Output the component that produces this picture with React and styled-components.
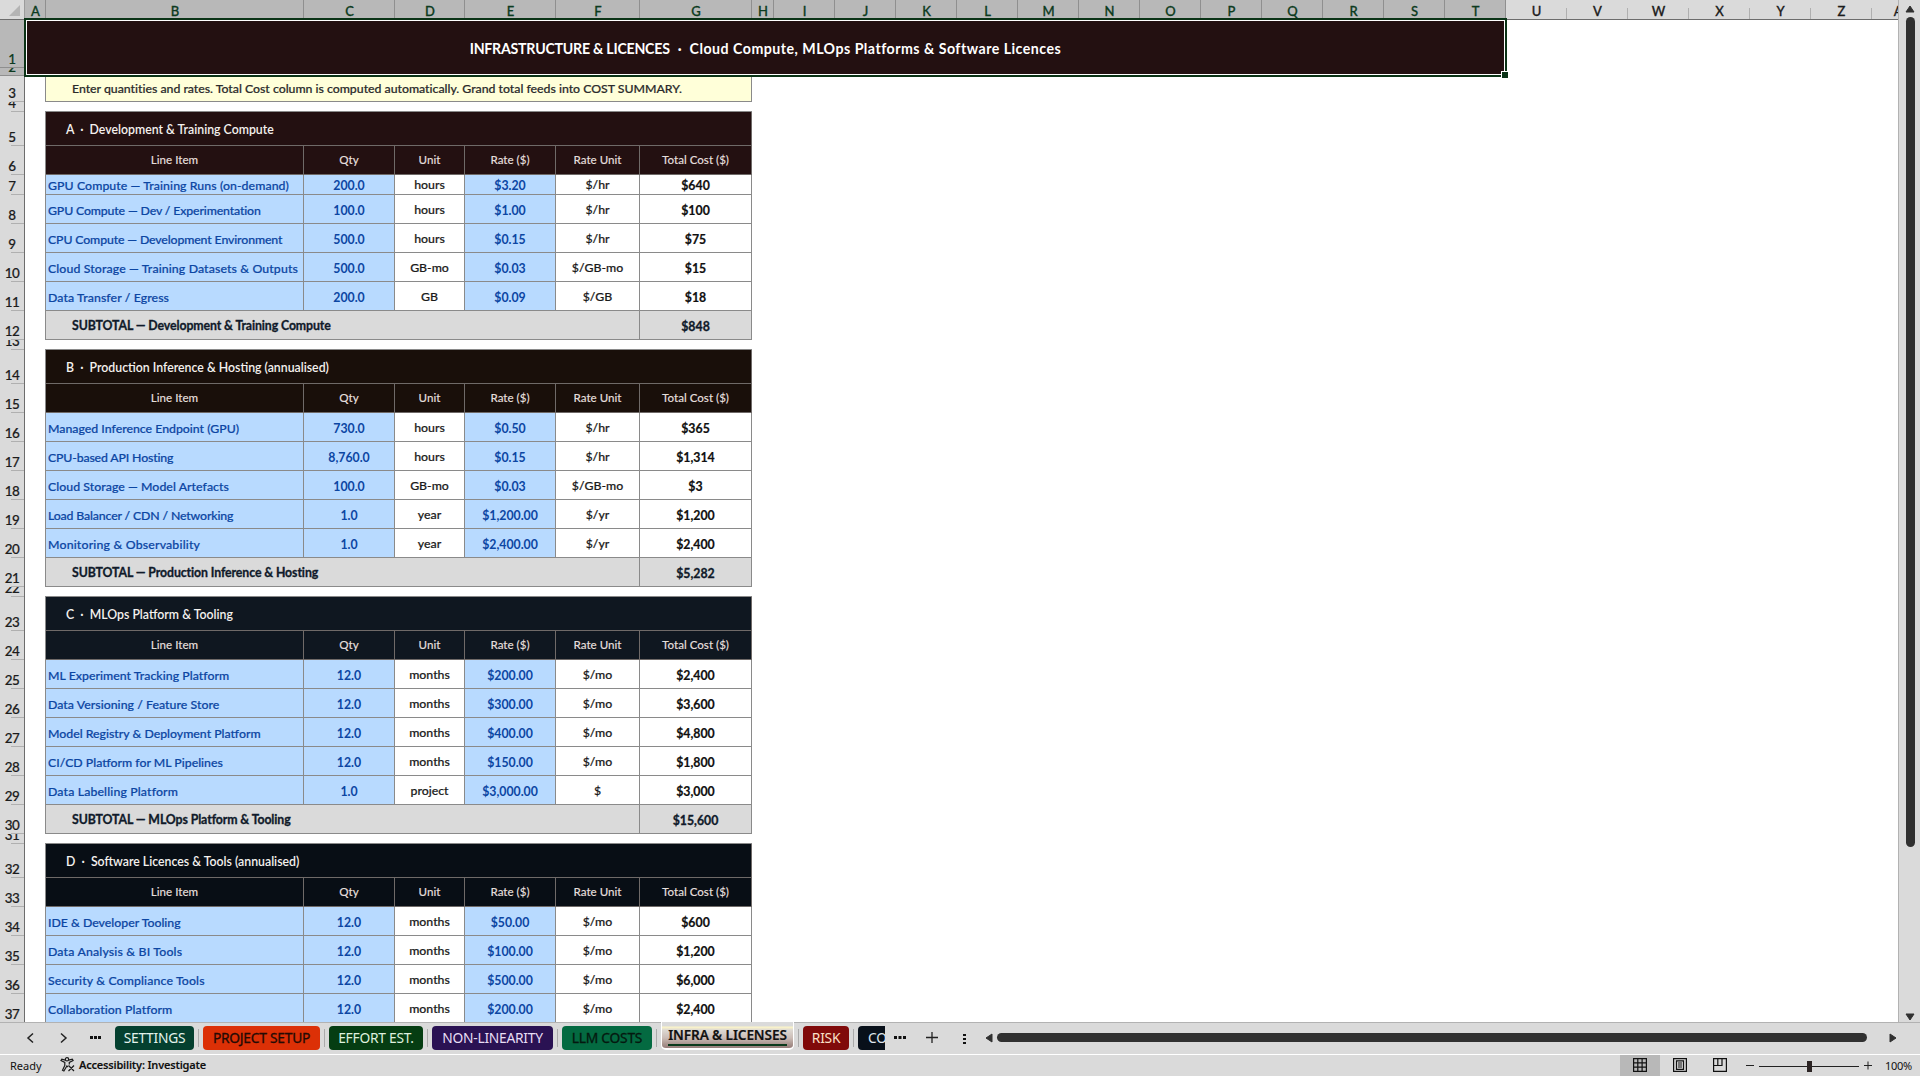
import React from 'react';
import styled, {createGlobalStyle} from 'styled-components';

const GRID_LINE = '#8a8a8a';
const CHROME = '#dadada';
const CHROME_DARK = '#b8b8b8';
const GREEN = '#0a3316';

const columns = [
  ['A', 21], ['B', 258], ['C', 91], ['D', 70], ['E', 91], ['F', 84], ['G', 112], ['H', 22],
  ...'IJKLMNOPQRSTUVWXYZ'.split('').map(name => [name, 61]),
  ['AA', 61],
];

const sections = [
  {
    letter: 'A',
    title: 'Development & Training Compute',
    color: '#231011',
    total: '$848',
    items: [
      ['GPU Compute — Training Runs (on-demand)', '200.0', 'hours', '$3.20', '$/hr', '$640', 0.08],
      ['GPU Compute — Dev / Experimentation', '100.0', 'hours', '$1.00', '$/hr', '$100', -0.14],
      ['CPU Compute — Development Environment', '500.0', 'hours', '$0.15', '$/hr', '$75', -0.13],
      ['Cloud Storage — Training Datasets & Outputs', '500.0', 'GB-mo', '$0.03', '$/GB-mo', '$15', 0.12],
      ['Data Transfer / Egress', '200.0', 'GB', '$0.09', '$/GB', '$18', 0.1],
    ],
  },
  {
    letter: 'B',
    title: 'Production Inference & Hosting (annualised)',
    subtotal: 'Production Inference & Hosting',
    color: '#190f0a',
    total: '$5,282',
    items: [
      ['Managed Inference Endpoint (GPU)', '730.0', 'hours', '$0.50', '$/hr', '$365'],
      ['CPU-based API Hosting', '8,760.0', 'hours', '$0.15', '$/hr', '$1,314', -0.15],
      ['Cloud Storage — Model Artefacts', '100.0', 'GB-mo', '$0.03', '$/GB-mo', '$3', 0.05],
      ['Load Balancer / CDN / Networking', '1.0', 'year', '$1,200.00', '$/yr', '$1,200', -0.15],
      ['Monitoring & Observability', '1.0', 'year', '$2,400.00', '$/yr', '$2,400', 0.18],
    ],
  },
  {
    letter: 'C',
    title: 'MLOps Platform & Tooling',
    color: '#0f1720',
    total: '$15,600',
    items: [
      ['ML Experiment Tracking Platform', '12.0', 'months', '$200.00', '$/mo', '$2,400', 0.03],
      ['Data Versioning / Feature Store', '12.0', 'months', '$300.00', '$/mo', '$3,600', 0.04],
      ['Model Registry & Deployment Platform', '12.0', 'months', '$400.00', '$/mo', '$4,800'],
      ['CI/CD Platform for ML Pipelines', '12.0', 'months', '$150.00', '$/mo', '$1,800'],
      ['Data Labelling Platform', '1.0', 'project', '$3,000.00', '$', '$3,000', 0.14],
    ],
  },
  {
    letter: 'D',
    title: 'Software Licences & Tools (annualised)',
    color: '#080e15',
    items: [
      ['IDE & Developer Tooling', '12.0', 'months', '$50.00', '$/mo', '$600'],
      ['Data Analysis & BI Tools', '12.0', 'months', '$100.00', '$/mo', '$1,200', 0.17],
      ['Security & Compliance Tools', '12.0', 'months', '$500.00', '$/mo', '$6,000', 0.13],
      ['Collaboration Platform', '12.0', 'months', '$200.00', '$/mo', '$2,400', 0.08],
    ],
  },
];

const rowHeights = [
  48, 8, 26, 10,
  34, 29, 20, 29, 29, 29, 29, 29, 10,
  34, 29, 29, 29, 29, 29, 29, 29, 10,
  34, 29, 29, 29, 29, 29, 29, 29, 10,
  34, 29, 29, 29, 29, 29,
];

const tabs = [
  {name: 'SETTINGS', width: 79, color: '#04402f', text: '#e3f3ec'},
  {name: 'PROJECT SETUP', width: 117, color: '#dc3006', text: '#240a04', heavy: true},
  {name: 'EFFORT EST.', width: 94, color: '#053d12', text: '#dff0df'},
  {name: 'NON-LINEARITY', width: 121, color: '#2a1253', text: '#e8def5'},
  {name: 'LLM COSTS', width: 90, color: '#046a41', text: '#04180f', heavy: true},
  {name: 'INFRA & LICENSES', width: 133, active: true},
  {name: 'RISK', width: 46, color: '#800a0a', text: '#fbe0c8'},
  {name: 'CO', width: 27, color: '#08101a', text: '#dfe6ee', cut: true},
];

const GlobalStyle = createGlobalStyle`
  * {
    box-sizing: border-box;
  }
  body {
    margin: 0;
    overflow: hidden;
  }
`;

const S = {
  Window: styled.div`
    width: 1920px;
    height: 1076px;
    display: flex;
    flex-direction: column;
    overflow: hidden;
    background: ${CHROME};
    font-family: Lato, 'Liberation Sans', sans-serif;
    white-space: pre;
  `,
  Main: styled.div`
    display: flex;
    height: 1022px;
  `,
  Pane: styled.div`
    position: relative;
    width: 1899px;
    overflow: hidden;
    background: #fff;
    border-right: 1px solid #b2b2b2;
  `,
  ColumnBar: styled.div`
    display: flex;
    height: 20px;
    width: 2000px;
    background: ${CHROME};
    border-bottom: 1px solid #6d6d6d;
  `,
  Corner: styled.div`
    flex: none;
    width: 25px;
    display: flex;
    justify-content: flex-end;
    padding: 5px 4px 0 0;
    border-right: 1px solid #9c9c9c;
  `,
  ColumnHead: styled.div`
    flex: none;
    width: ${p => p.$width}px;
    display: flex;
    justify-content: center;
    align-items: flex-end;
    line-height: 16px;
    font-size: 13px;
    font-weight: 500;
    -webkit-text-stroke: 0.3px currentColor;
    color: ${p => p.$selected ? '#0c3b20' : '#1c1c1c'};
    background: ${p => p.$selected
    ? `linear-gradient(#8f8f8f, #8f8f8f) right / 1px 100% no-repeat ${CHROME_DARK}`
    : `linear-gradient(#b0b0b0, #b0b0b0) right bottom / 1px 11px no-repeat ${CHROME}`};
  `,
  Body: styled.div`
    display: flex;
  `,
  RowBar: styled.div`
    width: 25px;
    background: ${CHROME};
    border-right: 1px solid #6d6d6d;
  `,
  RowHead: styled.div`
    height: ${p => p.$height}px;
    display: flex;
    justify-content: center;
    align-items: flex-end;
    overflow: hidden;
    font-size: 13.4px;
    font-weight: 500;
    letter-spacing: -0.5px;
    line-height: 17px;
    -webkit-text-stroke: 0.2px currentColor;
    color: ${p => p.$selected ? '#0c3b20' : '#1c1c1c'};
    background: ${p => p.$selected
    ? `linear-gradient(#8f8f8f, #8f8f8f) bottom / 100% 1px no-repeat ${CHROME_DARK}`
    : `linear-gradient(#b0b0b0, #b0b0b0) right bottom / 13px 1px no-repeat ${CHROME}`};
  `,
  Sheet: styled.div`
    display: flex;
    flex-direction: column;
  `,
  Banner: styled.div`
    position: relative;
    width: 1483px;
    height: 59px;
    margin: -2px 0 -1px -1px;
    display: flex;
    align-items: center;
    justify-content: center;
    gap: 8px;
    padding-top: 1px;
    background: #231011;
    border: 2px solid ${GREEN};
    box-shadow: inset 0 0 0 1px #fff;
    color: #fff;
    font-size: 14.2px;
    font-weight: 700;
    z-index: 1;
  `,
  BannerText: styled.span`
    letter-spacing: ${p => p.$tracking}px;
  `,
  FillHandle: styled.div`
    position: absolute;
    right: -3px;
    bottom: -3px;
    width: 6px;
    height: 6px;
    background: ${GREEN};
    box-shadow: 0 0 0 1px #fff;
  `,
  Table: styled.div`
    width: 707px;
    margin-left: 20px;
    border-left: 1px solid ${GRID_LINE};
  `,
  Note: styled.div`
    height: 26px;
    display: flex;
    margin-left: 20px;
    width: 707px;
    align-items: center;
    padding: 0 0 1px 26px;
    background: #ffffd9;
    border: solid ${GRID_LINE};
    border-width: 0 1px 1px;
    color: #2b2b2b;
    font-size: 12.3px;
    font-weight: 500;
    letter-spacing: -0.01px;
    -webkit-text-stroke: 0.2px currentColor;
  `,
  Gap: styled.div`
    height: 10px;
    width: 707px;
    margin-left: 20px;
    border-bottom: 1px solid ${GRID_LINE};
  `,
  Row: styled.div`
    display: flex;
    height: ${p => p.$short ? 20 : 29}px;
  `,
  SectionTitle: styled.div`
    height: 34px;
    display: flex;
    align-items: center;
    padding: 2px 0 0 20px;
    background: ${p => p.$color};
    color: #f4f1ee;
    border: solid #6f6a68;
    border-width: 0 1px 1px 0;
    font-size: 12.3px;
    font-weight: 600;
  `,
  Cell: styled.div`
    flex: none;
    width: ${p => p.$width}px;
    display: flex;
    align-items: center;
    justify-content: center;
    padding-top: ${p => p.$short ? 1 : 3}px;
    border: solid ${GRID_LINE};
    border-width: 0 1px 1px 0;
    font-size: 12.3px;
    font-weight: 500;
    -webkit-text-stroke: 0.2px currentColor;
    color: #1b1b1b;
    background: #fff;
  `,
};

const HeadCell = styled(S.Cell)`
  padding: 0 0 1px;
  background: ${p => p.$color};
  color: #e3dedb;
  border-color: #6f6a68;
  font-size: 11.6px;
  -webkit-text-stroke: 0.1px currentColor;
`;

const InputCell = styled(S.Cell)`
  background: #b8daff;
  color: #0c46a3;
  font-weight: 700;
  -webkit-text-stroke: 0;
`;

const NameCell = styled(InputCell)`
  justify-content: flex-start;
  padding-left: 2px;
  font-weight: 500;
  letter-spacing: ${p => p.$tracking || 0}px;
  -webkit-text-stroke: 0.2px currentColor;
`;

const UnitCell = styled(S.Cell)`
  padding-top: 0;
`;

const TotalCell = styled(S.Cell)`
  font-weight: 700;
  color: #101010;
`;

const SubtotalCell = styled(S.Cell)`
  justify-content: ${p => p.$label ? 'flex-start' : 'center'};
  padding: ${p => p.$label ? '0 0 0 26px' : '3px 0 0'};
  background: ${CHROME};
  color: #101a2a;
  font-weight: 700;
  letter-spacing: ${p => p.$label ? -0.1 : 0}px;
  -webkit-text-stroke: 0.3px currentColor;
`;

const Bars = {
  VScroll: styled.div`
    flex: 1;
    display: flex;
    flex-direction: column;
    align-items: center;
    padding: 5px 0 1px 1px;
  `,
  VThumb: styled.div`
    width: 9px;
    height: 830px;
    margin: 4px 0 auto;
    border-radius: 5px;
    background: #303030;
  `,
  TabBar: styled.div`
    height: 32px;
    display: flex;
    align-items: flex-start;
    border-top: 1px solid #b2b2b2;
    font-family: 'Noto Sans', 'Open Sans', sans-serif;
  `,
  Nav: styled.div`
    flex: none;
    width: 115px;
    height: 29px;
    padding-left: 24px;
    display: flex;
    align-items: center;
    gap: 20px;
  `,
  Tabs: styled.div`
    width: 770px;
    display: flex;
  `,
  Tab: styled.div`
    flex: none;
    width: ${p => p.$width}px;
    height: 24px;
    margin-top: 3px;
    display: flex;
    align-items: center;
    justify-content: ${p => p.$cut ? 'flex-start' : 'center'};
    padding: 0 0 1px ${p => p.$cut ? 10 : 0}px;
    overflow: hidden;
    border-radius: ${p => p.$cut ? '4px 0 0 4px' : '4px'};
    background: ${p => p.$color};
    color: ${p => p.$text};
    font-size: 13.8px;
    letter-spacing: -0.25px;
    -webkit-text-stroke: ${p => p.$heavy ? 0.3 : 0}px currentColor;
  `,
  ActiveTab: styled.div`
    flex: none;
    width: ${p => p.$width}px;
    height: 28px;
    margin-top: -1px;
    padding-top: 3px;
    display: flex;
    justify-content: center;
    align-items: flex-start;
    border: solid #fff;
    border-width: 0 1px 2px;
    border-radius: 0 0 5px 5px;
    background: linear-gradient(#dadada 0 4px, #fdf6c8 5px, #ddd8d2 8px, #cbbcb6 16px, #a9958f 22px, #967c79);
  `,
  ActiveLabel: styled.div`
    height: 21px;
    line-height: 20px;
    border-bottom: 2px solid #0b3a1c;
    color: #111;
    font-size: 13.6px;
    font-weight: 600;
    letter-spacing: -0.1px;
    -webkit-text-stroke: 0.2px currentColor;
  `,
  Divider: styled.div`
    flex: none;
    width: 1px;
    height: 18px;
    margin: 6px 4px 0;
    background: #aaa;
  `,
  Tools: styled.div`
    width: 100px;
    height: 29px;
    display: flex;
    align-items: center;
    padding-left: 9px;
  `,
  HThumb: styled.div`
    width: 870px;
    height: 9px;
    margin: 10px 22px 0 4px;
    border-radius: 5px;
    background: #303030;
  `,
  Arrow: styled.svg`
    display: block;
    flex: none;
    margin-top: ${p => p.$top || 0}px;
  `,
  Status: styled.div`
    height: 22px;
    display: flex;
    align-items: center;
    border-top: 1px solid #fff;
    font-family: 'Noto Sans', 'Open Sans', sans-serif;
    font-size: 11px;
    color: #111;
  `,
  Ready: styled.div`
    width: 50px;
    padding-left: 10px;
  `,
  Access: styled.div`
    display: flex;
    align-items: center;
    gap: 4px;
    height: 20px;
    margin: 0 auto 2px 10px;
    font-weight: 600;
    letter-spacing: -0.2px;
    -webkit-text-stroke: 0.1px currentColor;
  `,
  View: styled.div`
    width: 40px;
    height: 21px;
    display: flex;
    align-items: center;
    justify-content: center;
    padding-bottom: 2px;
    background: ${p => p.$active ? CHROME_DARK : 'transparent'};
  `,
  Zoom: styled.div`
    display: flex;
    align-items: center;
    width: 180px;
    padding-left: 6px;
  `,
  Percent: styled.div`
    margin-left: 12px;
    letter-spacing: -0.3px;
  `,
};

const COLUMN_TITLES = ['Line Item', 'Qty', 'Unit', 'Rate ($)', 'Rate Unit', 'Total Cost ($)'];
const WIDTHS = [258, 91, 70, 91, 84, 112];

function Section({letter, title, subtotal, color, total, items}) {
  return (
    <S.Table>
      <S.SectionTitle $color={color}>{`${letter}  ·  ${title}`}</S.SectionTitle>
      <S.Row>
        {COLUMN_TITLES.map((name, i) => (
          <HeadCell key={name} $width={WIDTHS[i]} $color={color}>{name}</HeadCell>
        ))}
      </S.Row>
      {items.map(([name, qty, unit, rate, rateUnit, cost, tracking], i) => {
        // only the very first data row of the sheet is short
        const short = letter === 'A' && i === 0;
        return (
          <S.Row key={name} $short={short}>
            <NameCell $width={258} $short={short} $tracking={tracking}>{name}</NameCell>
            <InputCell $width={91} $short={short}>{qty}</InputCell>
            <UnitCell $width={70}>{unit}</UnitCell>
            <InputCell $width={91} $short={short}>{rate}</InputCell>
            <UnitCell $width={84}>{rateUnit}</UnitCell>
            <TotalCell $width={112} $short={short}>{cost}</TotalCell>
          </S.Row>
        );
      })}
      {total && (
        <S.Row>
          <SubtotalCell $width={594} $label>SUBTOTAL — {subtotal || title}</SubtotalCell>
          <SubtotalCell $width={112}>{total}</SubtotalCell>
        </S.Row>
      )}
    </S.Table>
  );
}

function Triangle({points, width, height, top}) {
  return (
    <Bars.Arrow width={width} height={height} $top={top}>
      <polygon points={points} fill="#303030" stroke="#303030" strokeLinejoin="round"/>
    </Bars.Arrow>
  );
}

function TabStrip() {
  return (
    <Bars.TabBar>
      <Bars.Nav>
        <svg width="13" height="12" fill="none" stroke="#222" strokeWidth="1.5"><path d="M9 1.5 4 6l5 4.5"/></svg>
        <svg width="13" height="12" fill="none" stroke="#222" strokeWidth="1.5"><path d="m4 1.5 5 4.5-5 4.5"/></svg>
        <svg width="12" height="3" fill="#111"><path d="M0 0h3v3H0zM4 0h3v3H4zM8 0h3v3H8z"/></svg>
      </Bars.Nav>
      <Bars.Tabs>
        {tabs.map((tab, i) => (
          <React.Fragment key={tab.name}>
            {i > 0 && <Bars.Divider/>}
            {tab.active
              ? <Bars.ActiveTab $width={tab.width}><Bars.ActiveLabel>{tab.name}</Bars.ActiveLabel></Bars.ActiveTab>
              : (
                <Bars.Tab $width={tab.width} $color={tab.color} $text={tab.text} $cut={tab.cut} $heavy={tab.heavy}>
                  {tab.name}
                </Bars.Tab>
              )}
          </React.Fragment>
        ))}
      </Bars.Tabs>
      <Bars.Tools>
        <svg width="91" height="14">
          <path d="M0 5h3v3H0zM4.500 5h3v3h-3zM9 5h3v3H9z" fill="#111"/>
          <path d="M32 6.500h12M38 1v11" stroke="#222" strokeWidth="1.300"/>
          <path d="M69 3h3v2h-3zM69 7h3v2h-3zM69 11h3v2h-3z" fill="#111"/>
        </svg>
      </Bars.Tools>
      <Triangle width={8} height={10} top={10} points="7,1 7,9 1,5"/>
      <Bars.HThumb/>
      <Triangle width={8} height={10} top={10} points="1,1 1,9 7,5"/>
    </Bars.TabBar>
  );
}

function StatusBar() {
  return (
    <Bars.Status>
      <Bars.Ready>Ready</Bars.Ready>
      <Bars.Access>
        <svg width="15" height="15" viewBox="0 0 15 15" fill="none" stroke="#1a1a1a" strokeWidth="1.200">
          <circle cx="7" cy="2.300" r="1.700"/>
          <path d="M5.300 3.200 1.800 2.200 1 3.600l3.800 1.800v3L2.500 13.200l1.400.800 3-5 1 1M8.700 3.200l3.600-1 .8 1.400L9.300 5.400v2.200M8.500 8.500l5.500 5.500M14 8.500 8.500 14"/>
        </svg>
        Accessibility: Investigate
      </Bars.Access>
      <Bars.View $active>
        <svg width="14" height="14" fill="none" stroke="#111" strokeWidth="1.200"><path d="M.6.6h12.800v12.800H.6zM4.800.6v12.800M9.100.6v12.800M.6 4.800h12.800M.6 9.100h12.800"/></svg>
      </Bars.View>
      <Bars.View>
        <svg width="14" height="14" fill="none" stroke="#111" strokeWidth="1.200"><path d="M.6.6h12.800v12.800H.6zM3.500 2.800h7v8.500h-7zM5 5h4M5 7h4M5 9h4"/></svg>
      </Bars.View>
      <Bars.View>
        <svg width="14" height="14" fill="none" stroke="#111" strokeWidth="1.200"><path d="M.6.6h12.800v12.800H.6zM.6 7.500h8.400V.6M4.800.6v6.900"/></svg>
      </Bars.View>
      <Bars.Zoom>
        <svg width="127" height="14">
          <path d="M0 6.500h8M13 7.500h100M118 6.500h8M122 2.500v8" stroke="#222"/>
          <path d="M61 2h5v11h-5z" fill="#2b2424"/>
        </svg>
        <Bars.Percent>100%</Bars.Percent>
      </Bars.Zoom>
    </Bars.Status>
  );
}

function App() {
  return (
    <S.Window>
      <GlobalStyle/>
      <S.Main>
        <S.Pane>
          <S.ColumnBar>
            <S.Corner>
              <svg width="12" height="12"><path d="M12 0v11H1z" fill="#b4b4b4"/></svg>
            </S.Corner>
            {columns.map(([name, width], i) => (
              <S.ColumnHead key={name} $width={width} $selected={i < 20}>{name}</S.ColumnHead>
            ))}
          </S.ColumnBar>
          <S.Body>
            <S.RowBar>
              {rowHeights.map((height, i) => (
                <S.RowHead key={i} $height={height} $selected={i < 2}>{i + 1}</S.RowHead>
              ))}
            </S.RowBar>
            <S.Sheet>
              <S.Banner>
                <S.BannerText $tracking={-0.25}>INFRASTRUCTURE &amp; LICENCES</S.BannerText>
                <span>·</span>
                <S.BannerText $tracking={0.48}>Cloud Compute, MLOps Platforms &amp; Software Licences</S.BannerText>
                <S.FillHandle/>
              </S.Banner>
              <S.Note>Enter quantities and rates. Total Cost column is computed automatically. Grand total feeds into COST SUMMARY.</S.Note>
              {sections.map(section => (
                <React.Fragment key={section.letter}>
                  <S.Gap/>
                  <Section {...section}/>
                </React.Fragment>
              ))}
            </S.Sheet>
          </S.Body>
        </S.Pane>
        <Bars.VScroll>
          <Triangle width={10} height={8} points="1,7 9,7 5,1"/>
          <Bars.VThumb/>
          <Triangle width={10} height={8} points="1,1 9,1 5,7"/>
        </Bars.VScroll>
      </S.Main>
      <TabStrip/>
      <StatusBar/>
    </S.Window>
  );
}

export default App;
